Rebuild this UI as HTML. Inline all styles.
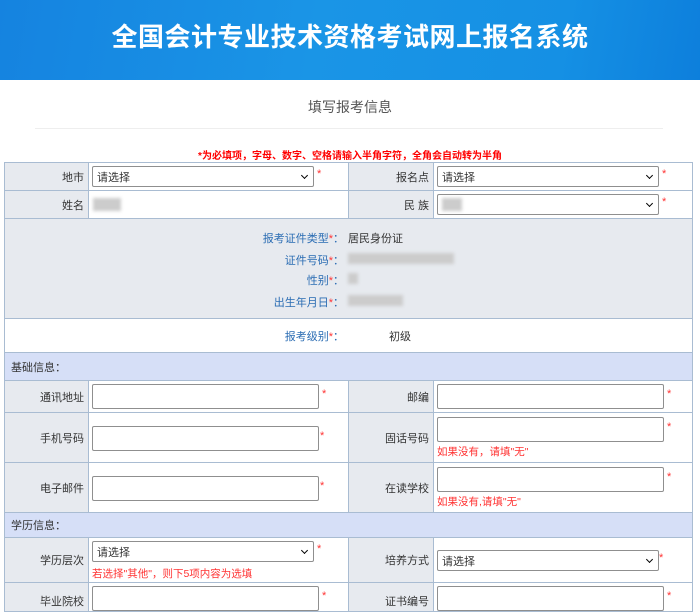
<!DOCTYPE html>
<html><head><meta charset="utf-8"><style>
*{margin:0;padding:0;box-sizing:border-box}
body{width:700px;height:600px;overflow:hidden;background:#fff;font-family:"Liberation Sans","Noto Sans CJK SC",sans-serif;font-size:11px;color:#333;position:relative}
.a{position:absolute}
.hd{left:0;top:0;width:700px;height:80px;background:linear-gradient(100deg,#1583e0 0%,#1a95e6 45%,#1590e4 80%,#0d7fdc 100%)}
.hd h1{position:absolute;left:0;right:0;top:17px;text-align:center;color:#fff;font-size:26px;font-weight:bold;letter-spacing:0.5px}
.lb{background:#e7eaef;border:1px solid #a9bcd2;text-align:right;padding-right:4px;display:flex;align-items:center;justify-content:flex-end}
.cl{background:#fff;border:1px solid #a9bcd2}
.sec{background:#d6dff7;border:1px solid #a9bcd2;padding-left:6px;display:flex;align-items:center}
.sel{background:#fff;border:1px solid #8f8f8f;border-radius:2px;padding-left:4px;font-size:11px;display:flex;align-items:center;height:21px}
.sel:after{content:"";position:absolute;right:6px;top:6px;width:4px;height:4px;border-right:1.5px solid #000;border-bottom:1.5px solid #000;transform:rotate(45deg)}
.in{background:#fff;border:1px solid #8f8f8f;border-radius:2px;height:25px}
.st{color:#f33;font-size:11px}
.rd{color:#f33;font-size:10.5px}
.bl{color:#2a6cb3;text-align:right}
.blur{background:#ccc;filter:blur(1.5px)}
</style></head><body>
<div class="a hd"><h1>全国会计专业技术资格考试网上报名系统</h1></div>
<div class="a" style="left:0;right:0;top:97px;text-align:center;font-size:14px;color:#555">填写报考信息</div>
<div class="a" style="left:35px;width:628px;top:128px;height:1px;background:#eee"></div>
<div class="a" style="left:0;width:700px;top:147px;text-align:center;color:#f00;font-weight:bold;font-size:10px">*为必填项，字母、数字、空格请输入半角字符，全角会自动转为半角</div>

<!-- row1 -->
<div class="a lb" style="left:4px;top:162px;width:85px;height:29px">地市</div>
<div class="a cl" style="left:88px;top:162px;width:261px;height:29px"></div>
<div class="a sel" style="left:92px;top:166px;width:222px">请选择</div><div class="a st" style="left:317px;top:168px">*</div>
<div class="a lb" style="left:348px;top:162px;width:86px;height:29px">报名点</div>
<div class="a cl" style="left:433px;top:162px;width:260px;height:29px"></div>
<div class="a sel" style="left:437px;top:166px;width:222px">请选择</div><div class="a st" style="left:662px;top:168px">*</div>
<!-- row2 -->
<div class="a lb" style="left:4px;top:190px;width:85px;height:29px">姓名</div>
<div class="a cl" style="left:88px;top:190px;width:261px;height:29px"></div>
<div class="a blur" style="left:93px;top:198px;width:28px;height:13px"></div>
<div class="a lb" style="left:348px;top:190px;width:86px;height:29px">民 族</div>
<div class="a cl" style="left:433px;top:190px;width:260px;height:29px"></div>
<div class="a sel" style="left:437px;top:194px;width:222px"><span class="blur" style="width:20px;height:13px;display:inline-block"></span></div><div class="a st" style="left:662px;top:196px">*</div>
<!-- gray block -->
<div class="a" style="left:4px;top:218px;width:689px;height:101px;background:#e7eaef;border:1px solid #a9bcd2"></div>
<div class="a bl" style="left:150px;width:194px;top:230px">报考证件类型<span class="st">*</span>：</div><div class="a" style="left:348px;top:230px">居民身份证</div>
<div class="a bl" style="left:150px;width:194px;top:252px">证件号码<span class="st">*</span>：</div><div class="a blur" style="left:348px;top:253px;width:106px;height:11px"></div>
<div class="a bl" style="left:150px;width:194px;top:272px">性别<span class="st">*</span>：</div><div class="a blur" style="left:348px;top:273px;width:10px;height:11px"></div>
<div class="a bl" style="left:150px;width:194px;top:294px">出生年月日<span class="st">*</span>：</div><div class="a blur" style="left:348px;top:295px;width:55px;height:11px"></div>
<div class="a" style="left:4px;top:318px;width:689px;height:35px;background:#fff;border:1px solid #a9bcd2"></div>
<div class="a bl" style="left:150px;width:194px;top:328px">报考级别<span class="st">*</span>：</div><div class="a" style="left:389px;top:328px">初级</div>
<!-- section -->
<div class="a sec" style="left:4px;top:352px;width:689px;height:29px">基础信息：</div>
<!-- row -->
<div class="a lb" style="left:4px;top:380px;width:85px;height:33px">通讯地址</div>
<div class="a cl" style="left:88px;top:380px;width:261px;height:33px"></div>
<div class="a in" style="left:92px;top:384px;width:227px"></div><div class="a st" style="left:322px;top:388px">*</div>
<div class="a lb" style="left:348px;top:380px;width:86px;height:33px">邮编</div>
<div class="a cl" style="left:433px;top:380px;width:260px;height:33px"></div>
<div class="a in" style="left:437px;top:384px;width:227px"></div><div class="a st" style="left:667px;top:388px">*</div>
<!-- row -->
<div class="a lb" style="left:4px;top:412px;width:85px;height:51px">手机号码</div>
<div class="a cl" style="left:88px;top:412px;width:261px;height:51px"></div>
<div class="a in" style="left:92px;top:426px;width:227px"></div><div class="a st" style="left:320px;top:430px">*</div>
<div class="a lb" style="left:348px;top:412px;width:86px;height:51px">固话号码</div>
<div class="a cl" style="left:433px;top:412px;width:260px;height:51px"></div>
<div class="a in" style="left:437px;top:417px;width:227px"></div><div class="a st" style="left:667px;top:421px">*</div>
<div class="a rd" style="left:437px;top:444px">如果没有，请填"无"</div>
<!-- row -->
<div class="a lb" style="left:4px;top:462px;width:85px;height:51px">电子邮件</div>
<div class="a cl" style="left:88px;top:462px;width:261px;height:51px"></div>
<div class="a in" style="left:92px;top:476px;width:227px"></div><div class="a st" style="left:320px;top:480px">*</div>
<div class="a lb" style="left:348px;top:462px;width:86px;height:51px">在读学校</div>
<div class="a cl" style="left:433px;top:462px;width:260px;height:51px"></div>
<div class="a in" style="left:437px;top:467px;width:227px"></div><div class="a st" style="left:667px;top:471px">*</div>
<div class="a rd" style="left:437px;top:494px">如果没有,请填"无"</div>
<!-- section -->
<div class="a sec" style="left:4px;top:512px;width:689px;height:26px">学历信息：</div>
<div class="a lb" style="left:4px;top:537px;width:85px;height:46px">学历层次</div>
<div class="a cl" style="left:88px;top:537px;width:261px;height:46px"></div>
<div class="a sel" style="left:92px;top:541px;width:222px">请选择</div><div class="a st" style="left:317px;top:543px">*</div>
<div class="a rd" style="left:92px;top:566px">若选择"其他"，则下5项内容为选填</div>
<div class="a lb" style="left:348px;top:537px;width:86px;height:46px">培养方式</div>
<div class="a cl" style="left:433px;top:537px;width:260px;height:46px"></div>
<div class="a sel" style="left:437px;top:550px;width:222px">请选择</div><div class="a st" style="left:659px;top:552px">*</div>
<div class="a lb" style="left:4px;top:582px;width:85px;height:30px;align-items:flex-start;padding-top:10px">毕业院校</div>
<div class="a cl" style="left:88px;top:582px;width:261px;height:30px"></div>
<div class="a in" style="left:92px;top:586px;width:227px"></div><div class="a st" style="left:322px;top:590px">*</div>
<div class="a lb" style="left:348px;top:582px;width:86px;height:30px;align-items:flex-start;padding-top:10px">证书编号</div>
<div class="a cl" style="left:433px;top:582px;width:260px;height:30px"></div>
<div class="a in" style="left:437px;top:586px;width:227px"></div><div class="a st" style="left:667px;top:590px">*</div>
</body></html>
